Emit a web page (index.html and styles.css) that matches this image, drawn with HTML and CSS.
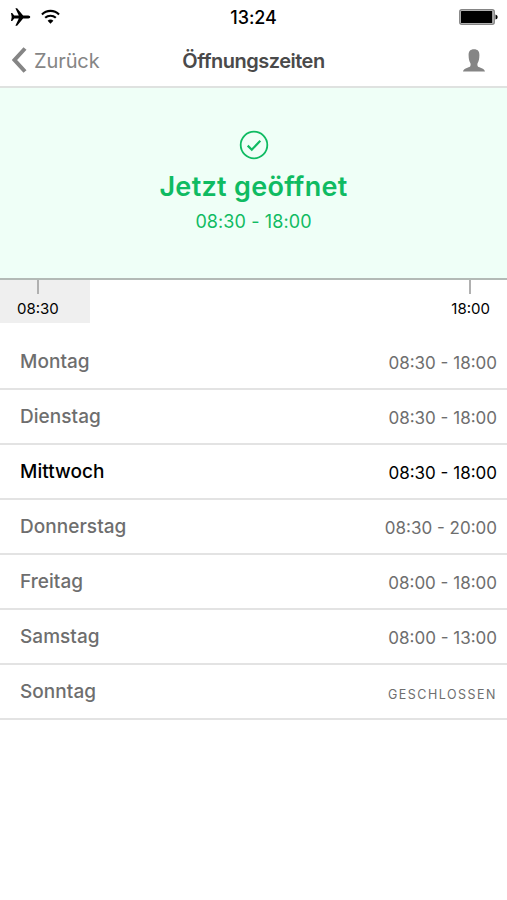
FILE: index.html
```html
<!DOCTYPE html>
<html lang="de">
<head>
  <meta charset="UTF-8">
  <meta name="viewport" content="width=device-width, initial-scale=1.0">
  <title>Öffnungszeiten</title>
  <link rel="stylesheet" href="styles.css">
</head>
<body>
  <div class="statusbar">
    <div class="signals">
      <svg width="20" height="18" viewBox="0 0 20 18"><path d="M0 5h1.200l2 2.600 4.600-.1L4.400.3h1.700l6 7.200h5.200q2 .300 2 1.500t-2 1.500h-5.200l-6 7.200H4.400l3.400-7.200-4.600-.1-2 2.600H0L.700 9z"/></svg>
      <svg width="19" height="16" viewBox="0 0 20 16"><path d="M1 5.300a12.700 12.700 0 0 1 18 0M4.400 8.900a8 8 0 0 1 11.200 0" fill="none" stroke="#000" stroke-width="2.200"/><path d="M7 12a4.200 4.200 0 0 1 6 0L10 15.200z"/></svg>
    </div>
    <div class="clock">13:24</div>
    <div class="battery">
      <svg width="39" height="16" viewBox="0 0 39 16"><rect x=".8" y=".8" width="34.400" height="14.400" rx="2" fill="#ddd" stroke="#858585" stroke-width="1.500"/><rect x="2" y="2" width="31.300" height="12" rx=".5"/><path d="M36.500 5.500q2.200.500 2.200 2.500t-2.200 2.500z"/></svg>
    </div>
  </div>

  <div class="navbar">
    <a class="back" href="#">
      <svg width="15" height="26" viewBox="0 0 15 26"><path d="M13 1.500L2.500 13 13 24.500" fill="none" stroke="#858585" stroke-width="4"/></svg>
      <span>Zurück</span>
    </a>
    <h1>Öffnungszeiten</h1>
    <a class="profile" href="#">
      <svg width="22" height="23" viewBox="0 0 22 23"><path d="M11 .3c3.800 0 5.400 2.100 5.400 5.600 0 3.500-.6 6.200-1.700 8.100-.5 1-.4 2.800.2 3.500 1.300 1.200 6.600 1.900 7.100 5H0c.5-3.100 5.800-3.800 7.100-5 .6-.7.700-2.500.2-3.500C6.200 12.100 5.600 9.400 5.600 5.900 5.600 2.400 7.200.3 11 .3z" fill="#858585"/></svg>
    </a>
  </div>

  <div class="status">
    <svg width="30" height="30" viewBox="0 0 30 30"><g fill="none" stroke="#0fbb62"><circle cx="15" cy="15" r="13.300" stroke-width="1.800"/><path d="M8.700 15.600l4.100 4.100 8.500-9" stroke-width="2.200"/></g></svg>
    <div class="state">Jetzt geöffnet</div>
    <div class="state-time">08:30 - 18:00</div>
  </div>

  <div class="timeline">
    <div class="mark start"><span>08:30</span></div>
    <div class="mark end"><span>18:00</span></div>
  </div>

  <ul class="days">
    <li><span class="day">Montag</span><span class="time">08:30 - 18:00</span></li>
    <li><span class="day">Dienstag</span><span class="time">08:30 - 18:00</span></li>
    <li class="today"><span class="day">Mittwoch</span><span class="time">08:30 - 18:00</span></li>
    <li><span class="day">Donnerstag</span><span class="time">08:30 - 20:00</span></li>
    <li><span class="day">Freitag</span><span class="time">08:00 - 18:00</span></li>
    <li><span class="day">Samstag</span><span class="time">08:00 - 13:00</span></li>
    <li><span class="day">Sonntag</span><span class="time closed">GESCHLOSSEN</span></li>
  </ul>
</body>
</html>
```
FILE: styles.css
```css
* {
  box-sizing: border-box;
}
body {
  margin: 0;
  background: #fff;
  color: #000;
  font-family: Inter, "Liberation Sans", sans-serif;
  white-space: nowrap;
}
svg {
  display: block;
}
a {
  color: inherit;
  text-decoration: none;
}
.statusbar {
  display: grid;
  grid-template-columns: 1fr auto 1fr;
  align-items: center;
  height: 34px;
  padding: 0 9px;
}
.signals {
  display: flex;
  align-items: center;
  gap: 10px;
  padding-left: 2px;
}
.clock {
  padding-top: 2px;
  font-size: 18px;
  font-weight: 500;
  line-height: 22px;
  letter-spacing: -0.1px;
}
.battery {
  justify-self: end;
}
.navbar {
  display: grid;
  grid-template-columns: 1fr auto 1fr;
  align-items: center;
  height: 54px;
  padding: 0 12px;
  border-bottom: 2px solid #dfe2e0;
}
.back {
  display: flex;
  align-items: center;
  gap: 7px;
  color: #858585;
  font-size: 20px;
  letter-spacing: -0.1px;
}
.back span {
  padding-top: 2px;
}
.navbar h1 {
  margin: 0;
  padding-top: 2px;
  color: #4a4a4a;
  font-size: 20px;
  font-weight: 600;
  letter-spacing: -0.5px;
}
.profile {
  justify-self: end;
  padding: 1px 10px 0 0;
}
.status {
  display: flex;
  flex-direction: column;
  align-items: center;
  height: 192px;
  padding-top: 42px;
  border-bottom: 2px solid #b3bab6;
  background: #effff7;
  color: #0fbb62;
}
.state {
  margin-top: 11px;
  font-size: 27px;
  font-weight: 600;
  line-height: 32px;
  letter-spacing: 0.3px;
}
.state-time {
  margin-top: 7px;
  font-size: 18px;
  line-height: 24px;
  letter-spacing: 0.1px;
}
.timeline {
  display: flex;
  justify-content: space-between;
  height: 43px;
  font-size: 15px;
  line-height: 20px;
}
.mark {
  display: flex;
  flex-direction: column;
  align-items: center;
}
.mark::before {
  content: "";
  width: 2px;
  height: 14px;
  margin-bottom: 5px;
  background: #b0b0b0;
}
.start {
  align-items: flex-start;
  width: 90px;
  padding-left: 17px;
  background: #efefef;
}
.start::before {
  margin-left: 20px;
}
.end {
  padding-right: 17px;
}
.end::before {
  margin-right: 2px;
}
.days {
  margin: 12px 0 0;
  padding: 0;
  list-style: none;
}
.days li {
  display: flex;
  justify-content: space-between;
  height: 55px;
  padding: 0 10px 0 20px;
  border-bottom: 2px solid #e3e3e3;
  color: #6e6e6e;
}
.days .today {
  color: #000;
}
.day {
  font-size: 19px;
  font-weight: 500;
  line-height: 53px;
  letter-spacing: 0.05px;
}
.time {
  font-size: 17px;
  line-height: 56px;
}
.closed {
  font-size: 12.5px;
  line-height: 59px;
  letter-spacing: 1.5px;
}
```
